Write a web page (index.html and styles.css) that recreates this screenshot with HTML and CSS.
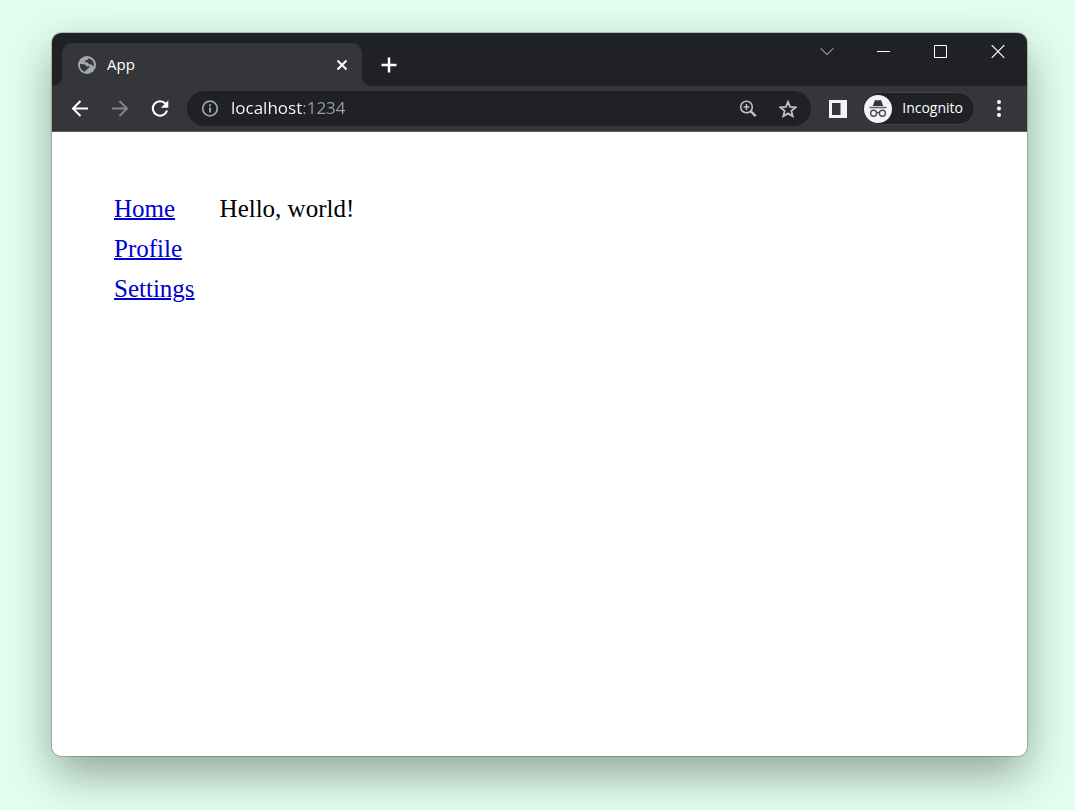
FILE: index.html
```html
<!DOCTYPE html>
<html lang="en">
<head>
<meta charset="utf-8">
<meta name="viewport" content="width=device-width, initial-scale=1">
<title>App</title>
<link rel="stylesheet" href="styles.css">
</head>
<body>
<div class="window">
  <header class="titlebar">
    <div class="tab">
      <svg class="globe" viewBox="0 0 18 18" width="18" height="18" aria-hidden="true"><circle cx="9" cy="9" r="9" fill="#a3a7ab"/><path d="M2 8 5.500 8.200Q8 8.400 8.200 10.200L11.200 10.300Q12 11.800 10.200 12.200L9.200 12.400 9.200 14 7.400 14.200 7.200 15.900A7 7 0 0 1 2 8ZM10.500 2.200Q10.600 3.800 8.800 4L7 4.400Q6.600 6 8 6.300L10 6.600Q10.200 8.400 12 8.400L13.600 8.600Q14 10.200 15.900 10A7 7 0 0 0 10.500 2.200Z" fill="#35363a"/></svg>
      <span class="tab-title">App</span>
      <button class="icon-button tab-close" aria-label="Close tab"><svg viewBox="0 0 12 12" width="12" height="12"><path d="M1.500 1.500l9 9m0-9l-9 9" stroke="#fff" stroke-width="2"/></svg></button>
    </div>
    <button class="icon-button new-tab" aria-label="New tab"><svg viewBox="0 0 16 16" width="16" height="16"><path d="M8 .5v15M.5 8h15" stroke="#fff" stroke-width="2.500"/></svg></button>
    <div class="window-controls">
      <button class="icon-button" aria-label="Search tabs"><svg viewBox="0 0 14 14" width="14" height="14"><path d="M.7 4.200 7 10.700l6.300-6.500" fill="none" stroke="#d0d1d3"/></svg></button>
      <button class="icon-button" aria-label="Minimize"><svg viewBox="0 0 14 14" width="14" height="14"><path d="M0 7.500h13" stroke="#fff"/></svg></button>
      <button class="icon-button" aria-label="Maximize"><svg viewBox="0 0 14 14" width="14" height="14"><path d="M.5 1.500h12v12H.5z" fill="none" stroke="#fff"/></svg></button>
      <button class="icon-button" aria-label="Close"><svg viewBox="0 0 14 14" width="14" height="14"><path d="M.7 1.200l12.600 12.600m0-12.600L.7 13.800" stroke="#fff" stroke-width="1.200"/></svg></button>
    </div>
  </header>
  <div class="toolbar">
    <nav class="history" aria-label="History">
      <button class="icon-button" aria-label="Back"><svg viewBox="0 0 18 18" width="18" height="18"><path d="M17 8.500H2m7.500-7.500L2 8.500l7.500 7.500" fill="none" stroke="#fff" stroke-width="2"/></svg></button>
      <button class="icon-button" aria-label="Forward"><svg viewBox="0 0 18 18" width="18" height="18"><path d="M1 8.500h15M8.500 1 16 8.500 8.500 16" fill="none" stroke="#848589" stroke-width="2"/></svg></button>
      <button class="icon-button" aria-label="Reload"><svg viewBox="0 0 18 18" width="18" height="18"><path d="M14.300 3.500A7.200 7.200 0 1 0 16 10.500" fill="none" stroke="#fff" stroke-width="2.100"/><path d="M17.300.3v7.400H9.900z" fill="#fff"/></svg></button>
    </nav>
    <div class="address">
      <svg viewBox="0 0 18 18" width="18" height="18" aria-hidden="true"><circle cx="9" cy="8.500" r="7.300" fill="none" stroke="#9aa0a6" stroke-width="1.800"/><path d="M9 7.500v5M9 4.200v2" stroke="#9aa0a6" stroke-width="2"/></svg>
      <input class="url" type="text" value="localhost:1234" aria-label="Address" spellcheck="false">
      <button class="icon-button" aria-label="Zoom"><svg viewBox="0 0 18 18" width="18" height="18"><circle cx="7.500" cy="7" r="5.800" fill="none" stroke="#bdc1c6" stroke-width="1.600"/><path d="M7.500 4.100v5.800M4.600 7h5.800" stroke="#bdc1c6" stroke-width="1.500"/><path d="M11.600 11.100 16.700 16.200" stroke="#bdc1c6" stroke-width="2.400"/></svg></button>
      <button class="icon-button" aria-label="Bookmark"><svg viewBox="0 0 18 18" width="18" height="18"><path d="M9 1.900l2.100 5 5.500.5-4.200 3.500 1.300 5.300L9 13.400l-4.700 2.800 1.300-5.300L1.400 7.400 6.900 6.900z" fill="none" stroke="#bdc1c6" stroke-width="1.800"/></svg></button>
    </div>
    <button class="icon-button" aria-label="Side panel"><svg viewBox="0 0 18 18" width="18" height="18"><path d="M0 0h18v18H0zM3 3v12h8.500V3z" fill="#f1f3f4" fill-rule="evenodd"/></svg></button>
    <button class="profile">
      <svg viewBox="0 0 28 28" width="28" height="28" aria-hidden="true"><circle cx="14" cy="14" r="14" fill="#f1f3f4"/><path d="M8.800 11 10.800 5.500Q11.200 4.800 12 5l2 .5 2-.5q.8-.2 1.200.5l2 5.500z" fill="#35363a"/><path d="M5.500 12.500h17" stroke="#5f6368" stroke-width="1.300"/><g fill="none" stroke="#4b4d51" stroke-width="1.400"><circle cx="9.600" cy="18.200" r="3"/><circle cx="18.400" cy="18.200" r="3"/><path d="M12.600 18q1.400-1 2.800 0"/></g></svg>
      <span class="profile-name">Incognito</span>
    </button>
    <button class="icon-button menu" aria-label="Menu"><svg viewBox="0 0 18 18" width="18" height="18"><g fill="#fff"><circle cx="9" cy="2" r="2"/><circle cx="9" cy="8.500" r="2"/><circle cx="9" cy="15" r="2"/></g></svg></button>
  </div>
  <div class="page">
    <nav class="links" aria-label="Main">
      <a href="#home">Home</a>
      <a href="#profile">Profile</a>
      <a href="#settings">Settings</a>
    </nav>
    <main>Hello, world!</main>
  </div>
</div>
</body>
</html>
```
FILE: styles.css
```css
* { box-sizing: border-box; }

body {
  display: flex;
  min-height: 100vh;
  margin: 0;
  padding: 33px 48px 54px 52px;
  background: #e1ffef;
  font-family: "Open Sans", "Noto Sans", sans-serif;
  font-size: 15px;
}

.window {
  display: flex;
  flex: 1;
  flex-direction: column;
  min-width: 0;
  overflow: hidden;
  border-radius: 9px;
  background: #fff;
  box-shadow: 0 0 0 1px rgba(0, 0, 0, .2), 0 18px 46px rgba(0, 0, 0, .36);
}

button {
  padding: 0;
  border: 0;
  background: none;
  color: #fff;
  font: inherit;
}

.icon-button {
  display: grid;
  flex: none;
  place-items: center;
}

.titlebar {
  display: flex;
  align-items: flex-end;
  height: 53px;
  padding-left: 10px;
  background: #202124;
}

.tab {
  position: relative;
  display: flex;
  align-items: center;
  gap: 11px;
  width: 300px;
  height: 43px;
  padding: 0 14px 0 16px;
  border-radius: 10px 10px 0 0;
  background: #35363a;
  color: #fff;
}

.tab::before,
.tab::after {
  content: "";
  position: absolute;
  bottom: 0;
  width: 10px;
  height: 10px;
}

.tab::before {
  right: 100%;
  background: radial-gradient(circle at 0 0, #202124 10px, #35363a 10px);
}

.tab::after {
  left: 100%;
  background: radial-gradient(circle at 100% 0, #202124 10px, #35363a 10px);
}

.tab-title {
  flex: 1;
  padding-bottom: 2px;
}

.new-tab {
  width: 16px;
  height: 43px;
  margin-left: 19px;
}

.window-controls {
  display: flex;
  align-self: flex-start;
  margin-right: 1px;
  margin-left: auto;
}

.window-controls .icon-button {
  width: 57px;
  height: 36px;
}

.toolbar {
  display: flex;
  align-items: center;
  height: 46px;
  padding: 0 19px;
  border-bottom: 1px solid #5b5c5f;
  background: #35363a;
}

.history {
  display: flex;
  gap: 22px;
  margin-right: 18px;
}

.address {
  display: flex;
  flex: 1;
  align-items: center;
  gap: 22px;
  min-width: 0;
  height: 35px;
  margin-right: 18px;
  padding: 0 14px;
  border-radius: 18px;
  background: #202124;
}

.url {
  flex: 1;
  min-width: 0;
  margin-left: -10px;
  padding: 0 0 2px;
  border: 0;
  outline: 0;
  background: linear-gradient(90deg, #fff 71px, #9aa0a6 71px);
  -webkit-background-clip: text;
  background-clip: text;
  color: transparent;
  font: 17px/24px "Open Sans", "Noto Sans", sans-serif;
}

.profile {
  display: flex;
  align-items: center;
  gap: 10px;
  height: 33px;
  margin-left: 15px;
  padding: 0 11px 0 1px;
  border: 1px solid #414246;
  border-radius: 17px;
  background: #202124;
}

.profile-name {
  padding-bottom: 2px;
  font-size: 14px;
}

.menu { margin-left: 15px; }

.page {
  display: flex;
  flex: 1;
  gap: 25px;
  padding: 57px 62px;
  color: #000;
  font: 25px/40px "Liberation Serif", serif;
}

.links {
  display: flex;
  flex-direction: column;
}

.links a {
  color: #0000d0;
  text-decoration-thickness: 2px;
}
```
